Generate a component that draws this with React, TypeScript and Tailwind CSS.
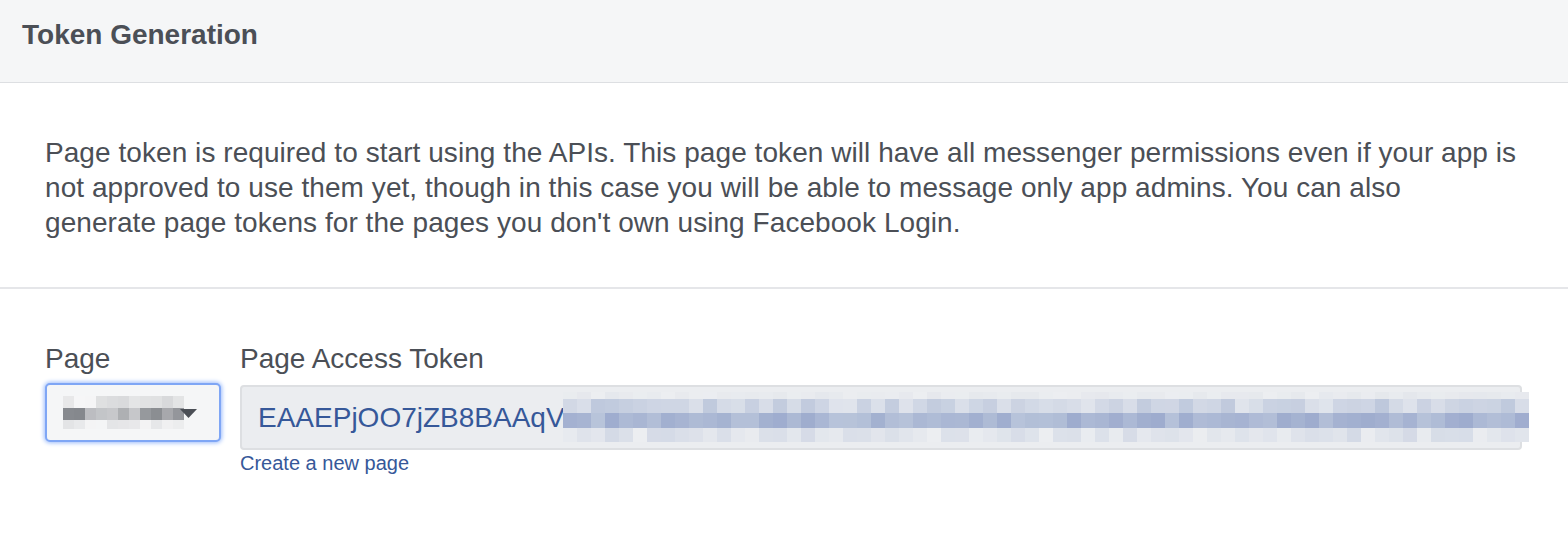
import React from "react";

// pseudo-random but stable, so the blurred token looks the same every render
function rand(seed: number) {
  const x = Math.sin(seed * 9301 + 49297) * 233280;
  return x - Math.floor(x);
}

function mix(a: number[], b: number[], t: number) {
  const c = a.map((v, i) => Math.round(v + (b[i] - v) * t));
  return `rgb(${c[0]},${c[1]},${c[2]})`;
}

const tokenRows = [
  { h: "h-[7px]", from: [236, 238, 241], to: [228, 231, 236] },
  { h: "h-[14px]", from: [224, 228, 236], to: [190, 200, 220] },
  { h: "h-[15px]", from: [184, 196, 218], to: [158, 172, 206] },
  { h: "h-[14px]", from: [236, 238, 241], to: [212, 218, 230] },
];

const pageRows = [
  { h: "h-[12px]", from: [246, 246, 247], to: [214, 215, 217] },
  { h: "h-[12px]", from: [200, 201, 204], to: [130, 133, 138] },
  { h: "h-[9px]", from: [246, 246, 247], to: [226, 227, 229] },
];

function Pixelated({
  rows,
  cols,
  cell,
  seed,
}: {
  rows: { h: string; from: number[]; to: number[] }[];
  cols: number;
  cell: string;
  seed: number;
}) {
  return (
    <div className="flex flex-col">
      {rows.map((r, ri) => (
        <div key={ri} className={`flex ${r.h}`}>
          {Array.from({ length: cols }).map((_, ci) => (
            <div
              key={ci}
              className={`${cell} shrink-0`}
              style={{ background: mix(r.from, r.to, rand(seed + ri * 131 + ci)) }}
            />
          ))}
        </div>
      ))}
    </div>
  );
}

export default function App() {
  return (
    <div className="w-[1568px] h-[542px] bg-white font-['Liberation_Sans',Arial,sans-serif] text-[#4b4f56] overflow-hidden">
      <div className="h-[83px] bg-[#f5f6f7] border-b border-[#dddfe2] px-[22px] flex items-center pb-[12px]">
        <h1 className="text-[28px] font-bold leading-none">Token Generation</h1>
      </div>

      <div className="border-b-2 border-[#e5e6e9] px-[45px] pt-[52px] pb-[47px]">
        <p className="text-[28px] leading-[35px] tracking-[0.06px] whitespace-nowrap">
          Page token is required to start using the APIs. This page token will have all messenger permissions even if
          your app is
          <br />
          not approved to use them yet, though in this case you will be able to message only app admins. You can also
          <br />
          generate page tokens for the pages you don't own using Facebook Login.
        </p>
      </div>

      <div className="flex gap-[19px] pl-[45px] pr-[46px] pt-[55px]">
        <div className="flex flex-col">
          <label className="text-[28px] leading-[30px] mb-[9px]">Page</label>
          <div className="w-[176px] h-[59px] rounded-[5px] border-2 border-[#7fa6f5] shadow-[0_0_4px_1px_#9cbcfb] bg-[#f5f6f7] flex items-center pl-[16px]">
            <Pixelated rows={pageRows} cols={11} cell="w-[11px]" seed={7} />
            <svg width="17" height="9" viewBox="0 0 17 9" className="-ml-[4px] mt-[2px]">
              <path d="M0 0h17L8.5 9z" fill="#4b4f56" />
            </svg>
          </div>
        </div>

        <div className="flex flex-col flex-1 min-w-0">
          <label className="text-[28px] leading-[30px] mb-[9px]">Page Access Token</label>
          <div className="relative h-[65px] mt-[2px] rounded-[4px] border-2 border-[#dddfe2] bg-[#ebedf0] flex items-center pl-[16px] overflow-visible">
            <span className="text-[28px] text-[#365899] leading-none whitespace-nowrap">EAAEPjOO7jZB8BAAqVI</span>
            <div className="absolute left-[321px] top-[5px]">
              <Pixelated rows={tokenRows} cols={69} cell="w-[14px]" seed={41} />
            </div>
          </div>
          <a href="#" className="text-[20px] leading-[24px] text-[#365899] mt-[1px]">
            Create a new page
          </a>
        </div>
      </div>
    </div>
  );
}
